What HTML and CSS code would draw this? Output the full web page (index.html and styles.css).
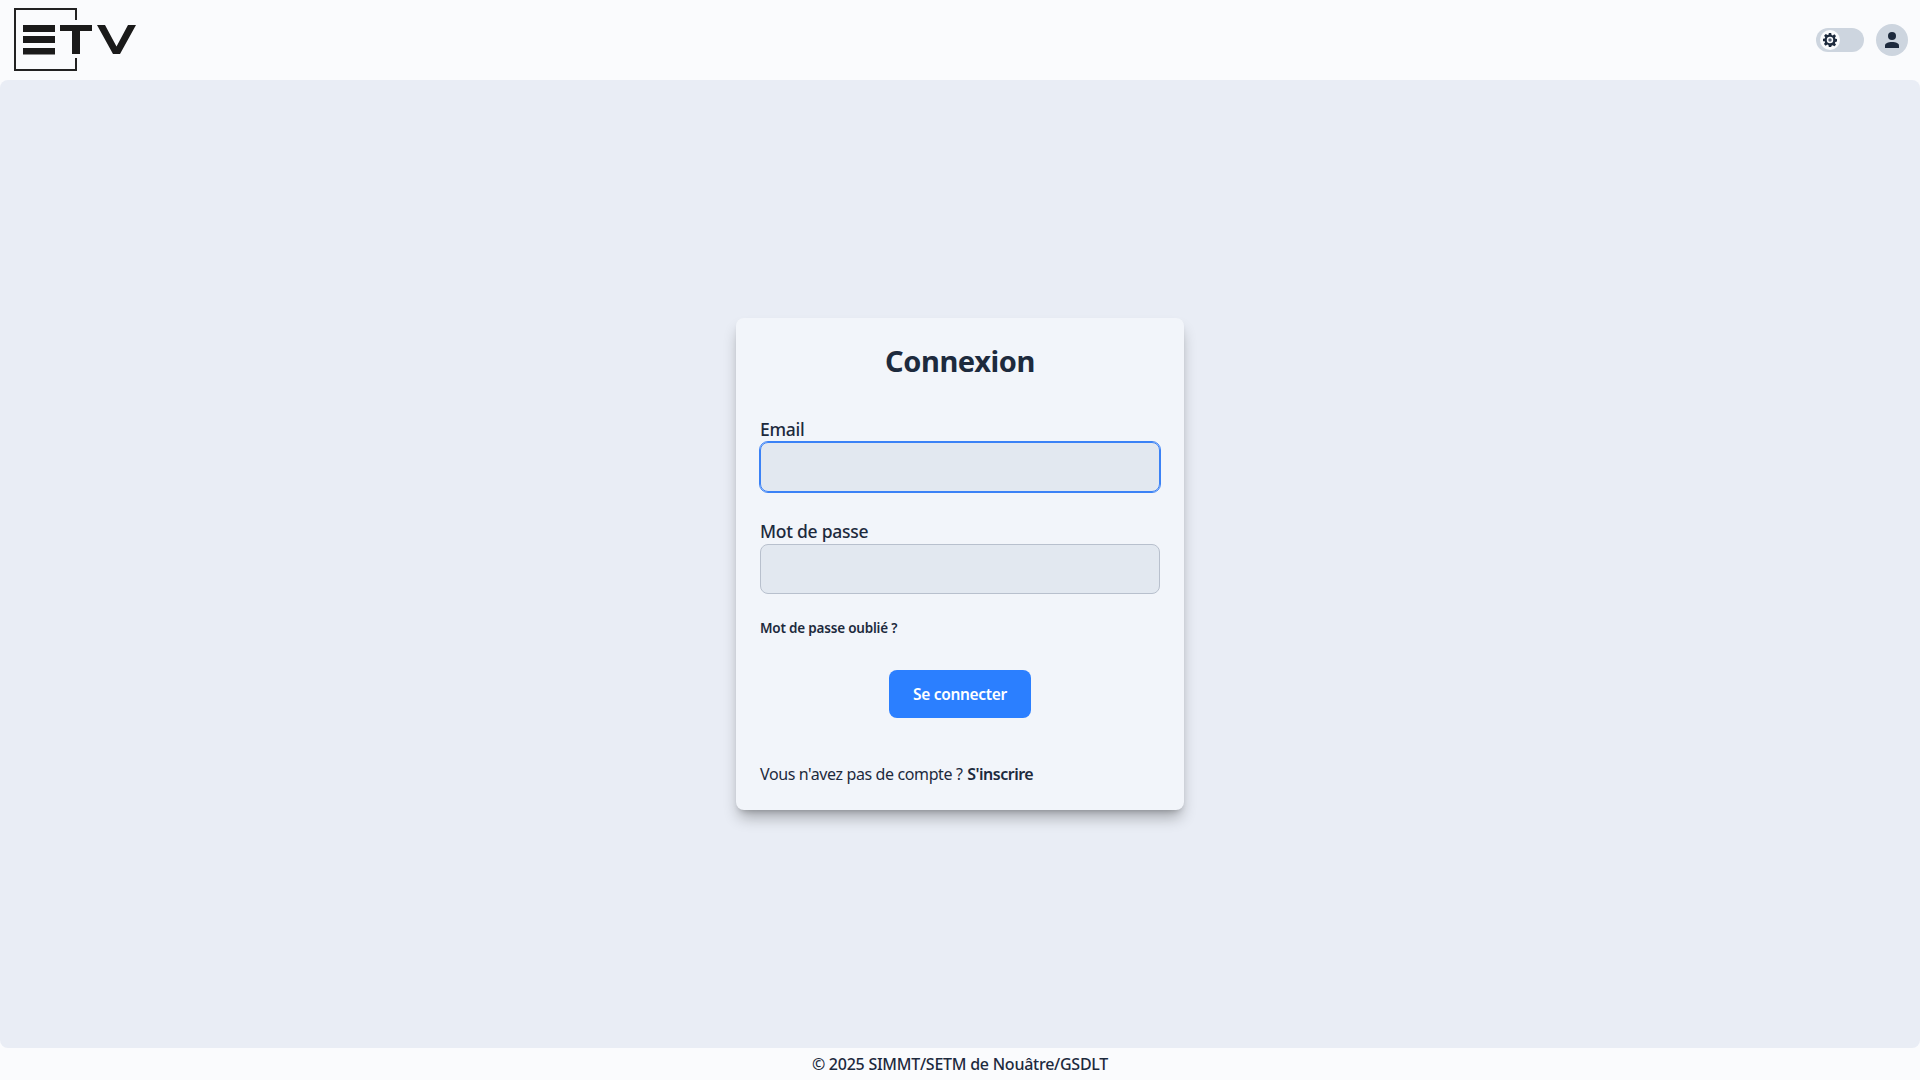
FILE: index.html
```html
<!DOCTYPE html>
<html lang="fr">
  <head>
    <meta charset="UTF-8" />
    <title>Connexion</title>
    <link rel="stylesheet" href="styles.css">
  </head>
  <body>
    <header class="topbar">
      <a class="logo" href="#">
        <svg width="140" height="80" viewBox="0 0 140 80">
          <path d="M76 20V9H15V70H76V58" fill="none" stroke="#222" stroke-width="2" />
          <rect x="23" y="25" width="32" height="7" fill="#1a1a1a" />
          <rect x="23" y="36" width="32" height="7" fill="#1a1a1a" />
          <rect x="23" y="48" width="32" height="6.500" fill="#1a1a1a" />
          <path d="M60 25H92V31H80V54H72V31H60Z" fill="#1a1a1a" />
          <path d="M97 25H105L116.500 46.500 128 25H136L120 54H113Z" fill="#1a1a1a" />
        </svg>
      </a>
      <div class="topbar-actions">
        <label class="theme-toggle">
          <span class="toggle-knob">
            <svg width="14" height="14" viewBox="0 0 24 24">
              <path fill="#1d2a3d" fill-rule="evenodd" d="M10 0h4l.7 3.400 1.900.8 2.900-1.900 2.800 2.800-1.900 2.900.8 1.900 3.400.7v4l-3.400.7-.8 1.900 1.900 2.900-2.800 2.800-2.900-1.900-1.900.8L14 24h-4l-.7-3.400-1.900-.8-2.900 1.900-2.800-2.800 1.900-2.900-.8-1.900L-.400 14v-4l3.400-.7.8-1.900-1.900-2.900 2.800-2.800 2.900 1.900 1.900-.8zM12 6.500a5.500 5.500 0 1 0 0 11 5.500 5.500 0 0 0 0-11z" />
              <circle cx="12" cy="12" r="3" fill="#5a6478" />
            </svg>
          </span>
        </label>
        <button class="avatar" type="button">
          <svg width="18" height="18" viewBox="0 0 18 18">
            <circle cx="9" cy="5" r="4" fill="#1d2a3d" />
            <path d="M2 17v-2.500C2 12.500 5 11 9 11s7 1.500 7 3.500V17z" fill="#1d2a3d" />
          </svg>
        </button>
      </div>
    </header>

    <main class="content">
      <form class="login-card">
        <h1>Connexion</h1>

        <div class="form-group">
          <label class="field-label" for="email">Email</label>
          <input class="field field-focus" type="email" id="email" />
        </div>

        <div class="form-group form-group-last">
          <label class="field-label" for="password">Mot de passe</label>
          <input class="field" type="password" id="password" />
        </div>

        <a class="forgot" href="#">Mot de passe oublié ?</a>

        <button class="submit" type="button">Se connecter</button>

        <p class="signup">Vous n'avez pas de compte ? <a href="#">S'inscrire</a></p>
      </form>
    </main>

    <footer class="bottombar">© 2025 SIMMT/SETM de Nouâtre/GSDLT</footer>
  </body>
</html>
```

FILE: styles.css
```css
* {
  box-sizing: border-box;
}

html,
body {
  height: 100%;
}

body {
  margin: 0;
  display: flex;
  flex-direction: column;
  font-family: "Noto Sans", "Open Sans", sans-serif;
  color: #1d2a3d;
  background-color: #fafbfd;
  overflow: hidden;
}

.topbar {
  height: 80px;
  flex: none;
  display: flex;
  align-items: center;
  justify-content: space-between;
  padding-right: 12px;
}

.logo {
  display: block;
  height: 80px;
}

.topbar-actions {
  display: flex;
  align-items: center;
  gap: 12px;
}

.theme-toggle {
  width: 48px;
  height: 24px;
  border-radius: 12px;
  background-color: #cdd5df;
  padding: 2px 0 0 4px;
  display: block;
}

.toggle-knob {
  width: 20px;
  height: 20px;
  border-radius: 50%;
  background-color: #fafbfd;
  display: flex;
  align-items: center;
  justify-content: center;
}

.avatar {
  width: 32px;
  height: 32px;
  padding: 0;
  border: none;
  border-radius: 50%;
  background-color: #cdd5df;
  display: flex;
  align-items: center;
  justify-content: center;
}

.content {
  flex: 1;
  background-color: #e9edf5;
  border-radius: 8px;
  display: flex;
  align-items: center;
  justify-content: center;
}

.login-card {
  width: 448px;
  height: 492px;
  padding: 24px;
  background-color: #f2f5fa;
  border-radius: 8px;
  box-shadow: 0 10px 15px -3px rgba(0, 0, 0, 0.3), 0 4px 6px -4px rgba(0, 0, 0, 0.25);
  display: flex;
  flex-direction: column;
}

.login-card h1 {
  margin: 1px 0 37px;
  font-size: 29px;
  line-height: 36px;
  font-weight: 700;
  letter-spacing: -0.4px;
  text-align: center;
}

.form-group {
  margin-bottom: 26px;
}

.form-group-last {
  margin-bottom: 24px;
}

.field-label {
  display: block;
  font-size: 17.5px;
  line-height: 26px;
  font-weight: 500;
  letter-spacing: -0.25px;
}

.field {
  display: block;
  width: 100%;
  height: 50px;
  background-color: #e2e8f0;
  border: 1px solid #b8c0cd;
  border-radius: 8px;
  outline: none;
}

.field-focus {
  border-color: #3b82f6;
  outline: 1px solid #3b82f6;
}

.forgot {
  font-size: 13.5px;
  line-height: 20px;
  font-weight: 600;
  letter-spacing: -0.2px;
  color: #1d2a3d;
  text-decoration: none;
}

.submit {
  align-self: center;
  margin-top: 32px;
  width: 142px;
  height: 48px;
  border: none;
  border-radius: 8px;
  background-color: #2b7fff;
  color: #fff;
  font-family: inherit;
  font-size: 15.5px;
  font-weight: 600;
  letter-spacing: -0.3px;
}

.signup {
  margin: 44px 0 0;
  font-size: 16px;
  line-height: 24px;
  letter-spacing: -0.38px;
}

.signup a {
  margin-left: 1px;
  font-weight: 600;
  letter-spacing: -0.5px;
  color: inherit;
  text-decoration: none;
}

.bottombar {
  height: 32px;
  flex: none;
  display: flex;
  align-items: center;
  justify-content: center;
  font-size: 16px;
  font-weight: 500;
  letter-spacing: -0.25px;
}
```
